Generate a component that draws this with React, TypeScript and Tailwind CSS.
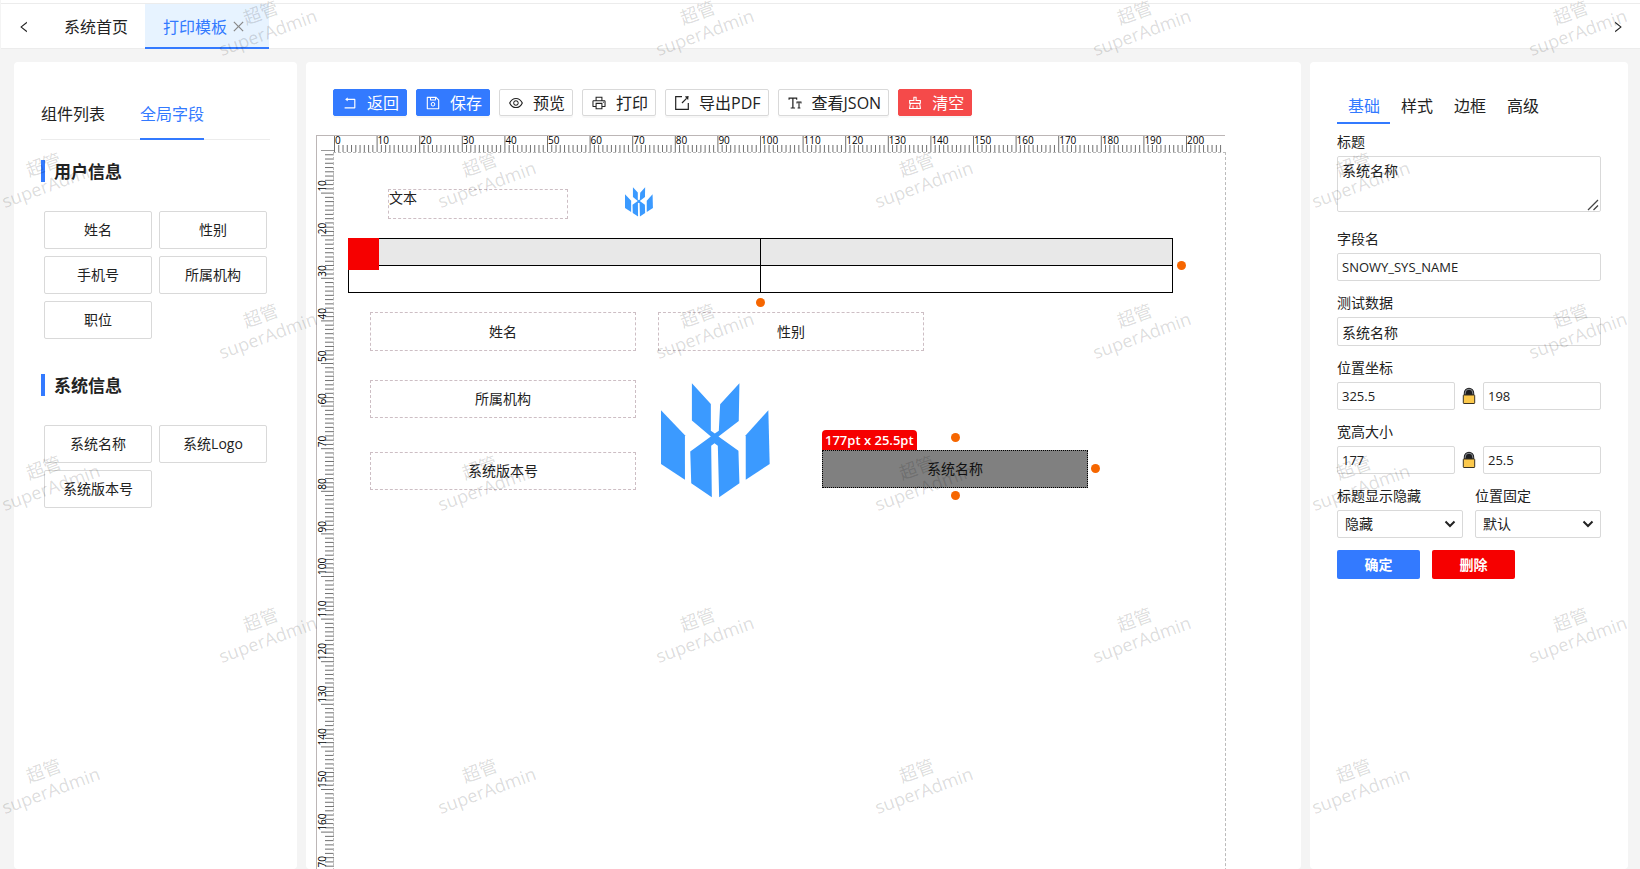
import type { ComponentType, ReactNode } from "react";
import {
  AiOutlineClear,
  AiOutlineClose,
  AiOutlineEye,
  AiOutlineFontSize,
  AiOutlineLeft,
  AiOutlinePrinter,
  AiOutlineRight,
  AiOutlineRollback,
  AiOutlineSave,
} from "react-icons/ai";

const MM = 4.26;

function ExportIcon({ size = 16 }: { size?: number }) {
  return (
    <svg width={size} height={size} viewBox="0 0 16 16" fill="none" stroke="currentColor" strokeWidth="1.2">
      <path d="M8 1.7H1.7v12.6h12.6V8" />
      <path d="M8 8l4.6-4.6" />
      <path d="M10.8 1.6l3.8-.5-.5 3.8z" fill="currentColor" stroke="none" />
    </svg>
  );
}

function LockIcon() {
  return (
    <svg width="14" height="18" viewBox="0 0 14 18" aria-hidden="true">
      <path d="M1.8 9V6a5.2 5.2 0 0 1 10.4 0v3z" fill="#1d1d1f" />
      <path d="M3.2 7.5V6a3.8 3.8 0 0 1 7.6 0v1.5" fill="none" stroke="#8d9196" strokeWidth="1" />
      <rect x="1.3" y="8" width="11.4" height="8.5" rx="0.6" fill="#fcc94c" stroke="#3a3222" strokeWidth="1" />
    </svg>
  );
}

function Logo({ className }: { className: string }) {
  return (
    <svg viewBox="63 280 328 344" className={className} fill="#3b9aff" aria-label="Logo">
      <path d="M156 280L213 342V423L225 431L237 423L241 343L299 280L297 393L236 440L296 483L299 581L238 623L234 468L224 460L214 468L216 623L154 581L151 485L213 440L156 392Z" />
      <path d="M63 361L135 436V570L63 523Z" />
      <path d="M386 361L318 436V570L390 523Z" />
    </svg>
  );
}

type Tool = { label: string; icon: ComponentType<{ size?: number }>; kind: "primary" | "plain" | "danger" };

const tools: Tool[] = [
  { label: "返回", icon: AiOutlineRollback, kind: "primary" },
  { label: "保存", icon: AiOutlineSave, kind: "primary" },
  { label: "预览", icon: AiOutlineEye, kind: "plain" },
  { label: "打印", icon: AiOutlinePrinter, kind: "plain" },
  { label: "导出PDF", icon: ExportIcon, kind: "plain" },
  { label: "查看JSON", icon: AiOutlineFontSize, kind: "plain" },
  { label: "清空", icon: AiOutlineClear, kind: "danger" },
];

const toolStyle = {
  primary: "border-[#337aff] bg-[#337aff] text-white",
  plain: "border-[#d9d9d9] bg-white text-[#222]",
  danger: "border-[#f54a4a] bg-[#f54a4a] text-white",
};

function Header() {
  return (
    <header className="flex h-[46px] shrink-0 items-stretch border-b border-t border-[#ececec] bg-white text-base text-[#222]">
      <button className="flex w-[45px] items-center justify-center pt-px" aria-label="向左">
        <AiOutlineLeft size={14} />
      </button>
      <nav className="-mb-px flex">
        <a href="#home" className="flex items-center border-b-2 border-transparent pl-[18px] pr-[17px] pt-0.5">
          系统首页
        </a>
        <div className="flex items-center gap-1 border-b-2 border-[#337aff] bg-[#e7f3ff] pl-[18px] pr-[23px] pt-0.5 text-[#337aff]">
          <a href="#print">打印模板</a>
          <button aria-label="关闭" className="text-[#888]">
            <AiOutlineClose size={15} />
          </button>
        </div>
      </nav>
      <button className="ml-auto mr-[15px] flex items-center justify-center pt-px" aria-label="向右">
        <AiOutlineRight size={14} />
      </button>
    </header>
  );
}

function FieldGroup({ title, items }: { title: string; items: string[] }) {
  return (
    <section className="mb-[35px]">
      <h2 className="flex h-[22px] items-center border-l-4 border-[#337aff] pl-[9px] pt-0.5 text-[17px] font-bold text-[#222]">
        {title}
      </h2>
      <div className="mx-[3px] mt-[29px] grid grid-cols-2 gap-[7px]">
        {items.map((item) => (
          <button key={item} className="h-[38px] rounded-xs border border-[#d9d9d9] bg-white text-sm text-[#222]">
            {item}
          </button>
        ))}
      </div>
    </section>
  );
}

function LeftPanel() {
  return (
    <aside className="w-[283px] shrink-0 overflow-hidden rounded bg-white px-[27px] pt-10">
      <div className="mb-5 flex gap-[35px] border-b border-[#ececec] text-base text-[#222]">
        <button className="-mb-px border-b-2 border-transparent pb-3">组件列表</button>
        <button className="-mb-px border-b-2 border-[#337aff] pb-3 text-[#337aff]">全局字段</button>
      </div>
      <FieldGroup title="用户信息" items={["姓名", "性别", "手机号", "所属机构", "职位"]} />
      <FieldGroup title="系统信息" items={["系统名称", "系统Logo", "系统版本号"]} />
    </aside>
  );
}

function HorizontalRuler() {
  const marks = Array.from({ length: 209 }, (_, i) => i);
  return (
    <svg width="910" height="17" className="block overflow-visible">
      <path d="M0 0.5H909M0.5 0V17" stroke="#bcb6b6" />
      <path d="M5 15.5H18" stroke="#999" />
      {marks.map((i) => (
        <path key={i} d={`M${18.5 + i * MM} ${i % 10 ? 10 : 1}V17`} stroke="#707070" />
      ))}
      {marks
        .filter((i) => i % 10 === 0)
        .map((i) => (
          <text key={i} x={19 + i * MM} y="9" fontSize="10" fill="#000">
            {i}
          </text>
        ))}
    </svg>
  );
}

function VerticalRuler() {
  const marks = Array.from({ length: 296 }, (_, i) => i + 1);
  return (
    <svg width="17" height="1265" className="block overflow-visible">
      <path d="M0.5 0V1265" stroke="#bcb6b6" />
      {marks.map((i) => (
        <path key={i} d={`M${i % 10 ? 9 : 5} ${i * MM - 1.5}H18`} stroke="#707070" />
      ))}
      {marks
        .filter((i) => i % 10 === 0)
        .map((i) => (
          <text key={i} transform={`translate(10 ${i * MM - 3}) rotate(-90)`} fontSize="10" fill="#000">
            {i}
          </text>
        ))}
    </svg>
  );
}

function Dot({ className }: { className: string }) {
  return <span className={`absolute size-[9px] rounded-full bg-[#f66600] ${className}`} />;
}

function Item({ className, children }: { className: string; children: ReactNode }) {
  return (
    <div className={`absolute flex w-[266px] items-center justify-center border border-dashed border-[#cdbec4] ${className}`}>
      {children}
    </div>
  );
}

function Paper() {
  return (
    <div className="relative h-[1265px] w-[893px] border border-dashed border-[#bbb] text-sm text-[#222]">
      <div className="absolute left-[54px] top-9 h-[30px] w-[180px] border border-dashed border-[#cdbec4] leading-4">
        文本
      </div>
      <Logo className="absolute left-[291px] top-[34px] h-[30px] w-[28px]" />

      <table className="absolute left-[14px] top-[85px] w-[825px] table-fixed border-collapse">
        <thead>
          <tr className="h-[27px] bg-[#e8e8e8]">
            <th className="border border-black p-0" />
            <th className="border border-black p-0" />
          </tr>
        </thead>
        <tbody>
          <tr className="h-[27px]">
            <td className="border border-black p-0" />
            <td className="border border-black p-0" />
          </tr>
        </tbody>
      </table>
      <span className="absolute left-[14px] top-[85px] h-8 w-[31px] bg-[#f60000]" />
      <Dot className="left-[843px] top-[108px]" />
      <Dot className="left-[422px] top-[145px]" />

      <Item className="left-9 top-[159px] h-[39px]">姓名</Item>
      <Item className="left-[324px] top-[159px] h-[39px]">性别</Item>
      <Item className="left-9 top-[227px] h-[38px]">所属机构</Item>
      <Item className="left-9 top-[299px] h-[38px]">系统版本号</Item>
      <Logo className="absolute left-[327px] top-[230px] h-[115px] w-[109px]" />

      <div className="absolute left-[488px] top-[297px] flex h-[38px] w-[266px] items-center justify-center border border-dotted border-black bg-[#808080] text-[#111]">
        系统名称
      </div>
      <span className="absolute left-[488px] top-[277px] flex h-5 items-center rounded-t bg-[#f60000] px-[3px] text-[13px] font-semibold text-white">
        177pt x 25.5pt
      </span>
      <Dot className="left-[617px] top-[280px]" />
      <Dot className="left-[757px] top-[311px]" />
      <Dot className="left-[617px] top-[338px]" />
    </div>
  );
}

function Designer() {
  return (
    <main className="min-w-0 flex-1 overflow-hidden rounded bg-white pt-[27px]">
      <div className="flex gap-[9px] pl-[27px]">
        {tools.map(({ label, icon: Icon, kind }) => (
          <button
            key={label}
            className={`flex h-[27px] shrink-0 items-center gap-[9px] whitespace-nowrap rounded-xs border pl-2 pr-[7px] text-base shadow-[0_2px_0_rgba(0,0,0,0.03)] ${toolStyle[kind]}`}
          >
            <Icon size={16} />
            {label}
          </button>
        ))}
      </div>
      <div className="ml-[10px] mt-[19px]">
        <HorizontalRuler />
        <div className="flex">
          <VerticalRuler />
          <Paper />
        </div>
      </div>
    </main>
  );
}

const box = "w-full min-w-0 rounded-xs border border-[#d9d9d9] bg-white text-[#222]";

function Field({ id, label, children }: { id: string; label: string; children: ReactNode }) {
  return (
    <div className="mb-3 min-w-0 flex-1">
      <label htmlFor={id} className="mb-1 block text-sm">
        {label}
      </label>
      {children}
    </div>
  );
}

function PairField({ id, label, first, second }: { id: string; label: string; first: string; second: string }) {
  return (
    <Field id={id} label={label}>
      <div className="flex items-center gap-[7px]">
        <input id={id} defaultValue={first} className={`${box} h-7 px-1 text-[13px]`} />
        <button type="button" aria-label="锁定" className="shrink-0">
          <LockIcon />
        </button>
        <input aria-label={label} defaultValue={second} className={`${box} h-7 px-1 text-[13px]`} />
      </div>
    </Field>
  );
}

function SelectField({ id, label, value }: { id: string; label: string; value: string }) {
  return (
    <Field id={id} label={label}>
      <div className="relative">
        <select id={id} className={`${box} block h-7 appearance-none pl-[7px] pr-6 text-sm`}>
          <option>{value}</option>
        </select>
        <svg
          width="12"
          height="8"
          viewBox="0 0 12 8"
          fill="none"
          stroke="#222"
          strokeWidth="2"
          className="pointer-events-none absolute right-[7px] top-2.5"
        >
          <path d="M1.5 1.5L6 6l4.500-4.500" />
        </svg>
      </div>
    </Field>
  );
}

function RightPanel() {
  return (
    <aside className="w-[318px] shrink-0 overflow-hidden rounded bg-white px-[27px] pt-8 text-[#222]">
      <div className="mb-2 flex text-base">
        {["基础", "样式", "边框", "高级"].map((tab, i) => (
          <button
            key={tab}
            className={`w-[53px] border-b-2 pb-1 pl-px ${i === 0 ? "border-[#337aff] text-[#337aff]" : "border-transparent"}`}
          >
            {tab}
          </button>
        ))}
      </div>
      <form>
        <Field id="title" label="标题">
          <div className="relative pb-[5px]">
            <textarea
              id="title"
              defaultValue="系统名称"
              className={`${box} block h-14 resize-none px-1 py-1 text-sm leading-5`}
            />
            <svg
              width="12"
              height="12"
              viewBox="0 0 12 12"
              stroke="#444"
              strokeWidth="1.3"
              className="pointer-events-none absolute bottom-[6px] right-0.5"
            >
              <path d="M1 11L11 1M6.500 11L11 6.500" />
            </svg>
          </div>
        </Field>
        <Field id="field" label="字段名">
          <input id="field" defaultValue="SNOWY_SYS_NAME" className={`${box} block h-7 px-1 text-[13px]`} />
        </Field>
        <Field id="test" label="测试数据">
          <input id="test" defaultValue="系统名称" className={`${box} block h-[29px] px-1 text-sm`} />
        </Field>
        <PairField id="pos" label="位置坐标" first="325.5" second="198" />
        <PairField id="size" label="宽高大小" first="177" second="25.5" />
        <div className="flex gap-3">
          <SelectField id="hide" label="标题显示隐藏" value="隐藏" />
          <SelectField id="fixed" label="位置固定" value="默认" />
        </div>
        <div className="flex gap-3 text-sm font-bold text-white">
          <button type="button" className="h-[29px] w-[83px] rounded-xs bg-[#337aff]">
            确定
          </button>
          <button type="button" className="h-[29px] w-[83px] rounded-xs bg-[#f60000]">
            删除
          </button>
        </div>
      </form>
    </aside>
  );
}

const stamps = [
  ...[50, 486, 923, 1360].flatMap((x) => [185, 488, 791].map((y) => [x, y])),
  ...[267, 704, 1141, 1577].flatMap((x) => [33, 336, 640].map((y) => [x, y])),
];

function Watermark() {
  return (
    <svg className="pointer-events-none absolute inset-0 z-50 h-full w-full" aria-hidden="true">
      {stamps.map(([x, y]) => (
        <g key={`${x}-${y}`} transform={`translate(${x} ${y}) rotate(-20)`} fontSize="18" fill="#000" fillOpacity="0.15" textAnchor="middle">
          <text y="-15">超管</text>
          <text y="6">superAdmin</text>
        </g>
      ))}
    </svg>
  );
}

export default function App() {
  return (
    <div className="relative flex h-screen flex-col overflow-hidden border-l border-[#f4f4f4] bg-[#f4f4f4] font-['Open_Sans','Noto_Sans_CJK_SC',sans-serif]">
      <div className="h-[3px] shrink-0 bg-white" />
      <Header />
      <div className="flex min-h-0 flex-1 gap-[9px] pl-[13px] pr-3 pt-[13px]">
        <LeftPanel />
        <Designer />
        <RightPanel />
      </div>
      <Watermark />
    </div>
  );
}
